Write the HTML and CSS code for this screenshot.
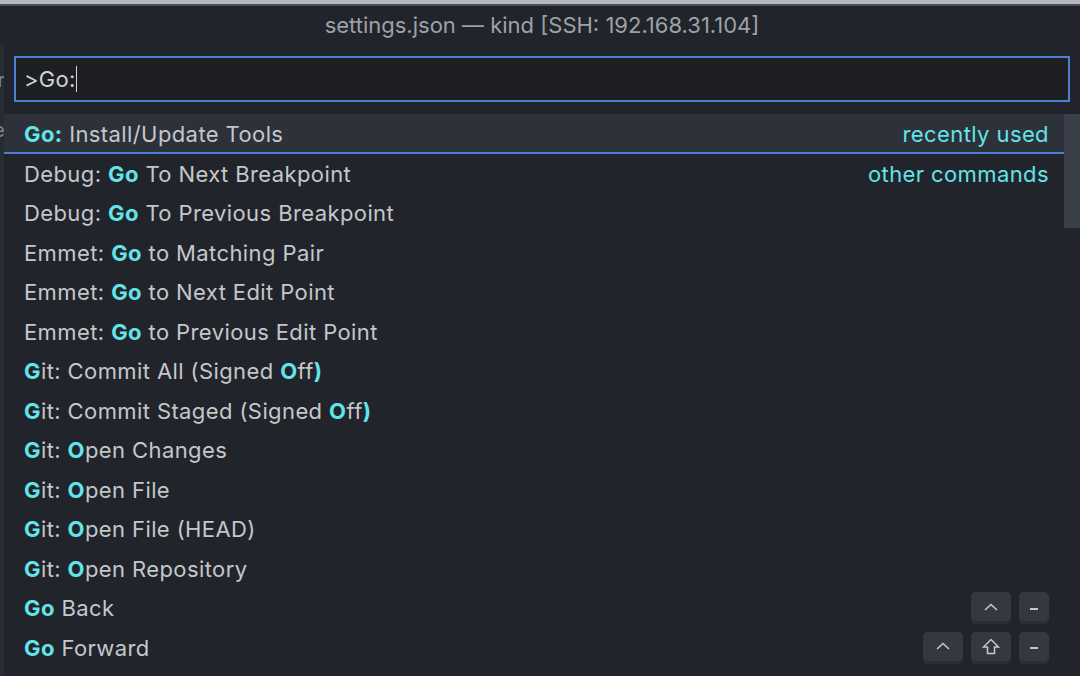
FILE: index.html
```html
<!DOCTYPE html>
<html>
<head>
<meta charset="utf-8">
<link rel="stylesheet" href="styles.css">
</head>
<body>
<div class="topline"></div>
<div class="titlebar">settings.json — kind [SSH: 192.168.31.104]</div>
<div class="main">
  <div class="edge"><span class="e1">r</span><span class="e2">e</span></div>
  <div class="widget">
    <div class="input">&gt;Go:<span class="caret"></span></div>
    <div class="list">
      <div class="row selected"><span class="label"><b>Go:</b> Install/Update Tools</span><span class="group">recently used</span></div>
      <div class="row"><span class="label">Debug: <b>Go</b> To Next Breakpoint</span><span class="group">other commands</span></div>
      <div class="row"><span class="label">Debug: <b>Go</b> To Previous Breakpoint</span></div>
      <div class="row"><span class="label">Emmet: <b>Go</b> to Matching Pair</span></div>
      <div class="row"><span class="label">Emmet: <b>Go</b> to Next Edit Point</span></div>
      <div class="row"><span class="label">Emmet: <b>Go</b> to Previous Edit Point</span></div>
      <div class="row"><span class="label"><b>G</b>it: Commit All (Signed <b>O</b>ff<b>)</b></span></div>
      <div class="row"><span class="label"><b>G</b>it: Commit Staged (Signed <b>O</b>ff<b>)</b></span></div>
      <div class="row"><span class="label"><b>G</b>it: <b>O</b>pen Changes</span></div>
      <div class="row"><span class="label"><b>G</b>it: <b>O</b>pen File</span></div>
      <div class="row"><span class="label"><b>G</b>it: <b>O</b>pen File (HEAD)</span></div>
      <div class="row"><span class="label"><b>G</b>it: <b>O</b>pen Repository</span></div>
      <div class="row"><span class="label"><b>Go</b> Back</span>
        <span class="keys">
          <span class="key"><svg width="14" height="8" viewBox="0 0 14 8"><path d="M1 7 L7 1.5 L13 7" fill="none" stroke="#c8c8c8" stroke-width="1.6"/></svg></span>
          <span class="key narrow"><span class="dash"></span></span>
        </span>
      </div>
      <div class="row"><span class="label"><b>Go</b> Forward</span>
        <span class="keys">
          <span class="key"><svg width="14" height="8" viewBox="0 0 14 8"><path d="M1 7 L7 1.5 L13 7" fill="none" stroke="#c8c8c8" stroke-width="1.6"/></svg></span>
          <span class="key"><svg width="18" height="17" viewBox="0 0 18 17"><path d="M9 1.5 L16.5 9 L12.5 9 L12.5 15.5 L5.5 15.5 L5.5 9 L1.5 9 Z" fill="none" stroke="#c8c8c8" stroke-width="1.5" stroke-linejoin="miter"/></svg></span>
          <span class="key narrow"><span class="dash"></span></span>
        </span>
      </div>
    </div>
    <div class="scrollbar"></div>
  </div>
</div>
</body>
</html>
```

FILE: styles.css
```css
* { box-sizing: border-box; }
html, body {
  margin: 0;
  padding: 0;
  width: 1080px;
  height: 676px;
  overflow: hidden;
  background: #21252b;
  font-family: Inter, "Noto Sans", sans-serif;
}
.topline {
  height: 6px;
  background: #b9b9bd;
  border-bottom: 2px solid #4b4e54;
}
.titlebar {
  height: 38px;
  line-height: 38px;
  text-align: center;
  color: #9da1a8;
  font-size: 22px;
  background: #21252b;
  padding-left: 4px;
}
.main {
  display: flex;
  height: 632px;
}
.edge {
  width: 4px;
  background: #282c34;
  position: relative;
  overflow: hidden;
  color: #7f848e;
  font-size: 20px;
}
.edge span {
  position: absolute;
  right: -1px;
}
.edge .e1 { top: 24px; }
.edge .e2 { top: 74px; }
.widget {
  flex: 1;
  position: relative;
  background: #21252b;
  padding-top: 12px;
}
.input {
  margin: 0 10px;
  height: 46px;
  border: 2px solid #4d7fd6;
  background: #1d1f23;
  color: #d0d3d8;
  font-size: 22px;
  letter-spacing: 0.3px;
  padding-left: 8px;
  display: flex;
  align-items: center;
}
.caret {
  display: inline-block;
  width: 1px;
  height: 26px;
  background: #d0d3d8;
  margin-left: 0;
}
.list {
  margin-top: 12px;
}
.row {
  height: 39.5px;
  display: flex;
  align-items: center;
  justify-content: space-between;
  padding-left: 20px;
  padding-right: 31px;
  color: #c4c7cc;
  font-size: 22px;
  letter-spacing: 0.4px;
}
.row b {
  color: #62e4e8;
  font-weight: 700;
}
.row.selected {
  background: #2c313a;
  border-bottom: 2px solid #4d7fd6;
  height: 40px;
  padding-top: 1px;
}
.group {
  color: #62e4e8;
}
.keys {
  display: flex;
  gap: 8px;
}
.key {
  width: 40px;
  height: 32px;
  border-radius: 5px;
  background: #35383e;
  box-shadow: inset 0 -3px 0 #2b2e33;
  display: flex;
  align-items: center;
  justify-content: center;
  padding-bottom: 3px;
}
.key.narrow {
  width: 30px;
}
.dash {
  width: 8px;
  height: 2px;
  background: #c8c8c8;
  margin-top: 4px;
}
.scrollbar {
  position: absolute;
  right: 0;
  top: 70px;
  width: 16px;
  height: 114px;
  background: #3a3f4a;
}
```
